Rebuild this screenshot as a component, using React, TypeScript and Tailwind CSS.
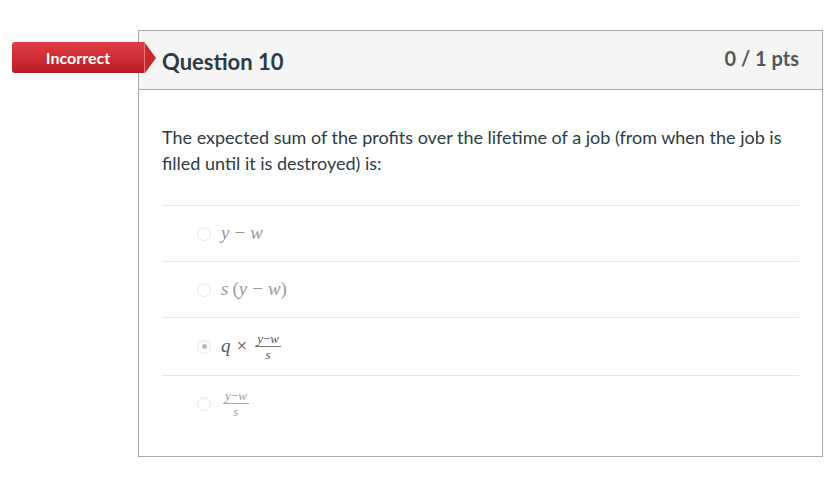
import type { ReactNode } from 'react';

const mathFont = "font-['Liberation_Serif','DejaVu_Serif',serif] italic";

const Frac = ({ num, den, dark }: { num: ReactNode; den: ReactNode; dark?: boolean }) => (
  <span className="inline-flex flex-col items-center align-middle mx-[2px]">
    <span className={`text-[13px] leading-[14px] px-[2px] ${dark ? 'text-[#555]' : 'text-[#999]'}`}>{num}</span>
    <span className={`block h-px w-full ${dark ? 'bg-[#777]' : 'bg-[#aaa]'}`} />
    <span className={`text-[13px] leading-[15px] ${dark ? 'text-[#555]' : 'text-[#999]'}`}>{den}</span>
  </span>
);

const Radio = ({ checked }: { checked?: boolean }) => (
  <span className="w-[14px] h-[14px] rounded-full border border-[#ececec] bg-white shadow-[inset_0_1px_2px_rgba(0,0,0,0.06)] flex items-center justify-center shrink-0">
    {checked && <span className="w-[5px] h-[5px] rounded-full bg-[#bbb]" />}
  </span>
);

interface Option {
  id: string;
  checked?: boolean;
  body: ReactNode;
  h: string;
}

const options: Option[] = [
  {
    id: 'a',
    h: 'h-[56px]',
    body: (
      <span className={`${mathFont} text-[19px] text-[#999]`}>
        y<span className="not-italic mx-[5px]">−</span>w
      </span>
    ),
  },
  {
    id: 'b',
    h: 'h-[56px]',
    body: (
      <span className={`${mathFont} text-[19px] text-[#999]`}>
        s<span className="not-italic ml-[4px]">(</span>y<span className="not-italic mx-[5px]">−</span>w
        <span className="not-italic">)</span>
      </span>
    ),
  },
  {
    id: 'c',
    h: 'h-[58px]',
    checked: true,
    body: (
      <span className={`${mathFont} text-[19px] text-[#555] flex items-center`}>
        q<span className="not-italic mx-[6px]">×</span>
        <Frac dark num={<>y<span className="not-italic">−</span>w</>} den="s" />
      </span>
    ),
  },
  {
    id: 'd',
    h: 'h-[56px]',
    body: (
      <span className={`${mathFont} text-[19px] flex items-center`}>
        <Frac num={<>y<span className="not-italic">−</span>w</>} den="s" />
      </span>
    ),
  },
];

export default function App() {
  return (
    <div className="relative w-[825px] h-[477px] bg-white font-['Lato','Liberation_Sans',sans-serif] pt-[30px] pl-[138px]">
      <div className="absolute left-[12px] top-[42px] flex items-center h-[31px]">
        <div className="h-[31px] w-[133px] rounded-l-[3px] bg-gradient-to-b from-[#e23c44] to-[#b81d24] flex items-center justify-center text-white font-bold text-[16px] border-r border-[#e8767b]">
          Incorrect
        </div>
        <div className="w-0 h-0 border-y-[15.5px] border-y-transparent border-l-[11px] border-l-[#c9262e]" />
      </div>

      <div className="w-[685px] h-[427px] border border-[#aaa]">
        <div className="h-[59px] bg-[#f5f5f5] border-b border-[#aaa] flex items-start justify-between pl-[23px] pr-[23px]">
          <h2 className="mt-[18px] text-[22px] leading-[26px] font-bold text-[#2d3b45]">Question 10</h2>
          <span className="mt-[15px] text-[20px] leading-[24px] font-bold text-[#555]">0 / 1 pts</span>
        </div>

        <div className="px-[23px] pt-[34px]">
          <p className="text-[18px] leading-[26px] text-[#2d3b45]">
            The expected sum of the profits over the lifetime of a job (from when the job is filled until it is destroyed) is:
          </p>
          <div className="mt-[29px] w-[637px]">
            {options.map((o) => (
              <div key={o.id} className={`${o.h} flex items-center gap-[10px] pl-[35px] border-t border-[#e6e6e6]`}>
                <Radio checked={o.checked} />
                {o.body}
              </div>
            ))}
          </div>
        </div>
      </div>
    </div>
  );
}
